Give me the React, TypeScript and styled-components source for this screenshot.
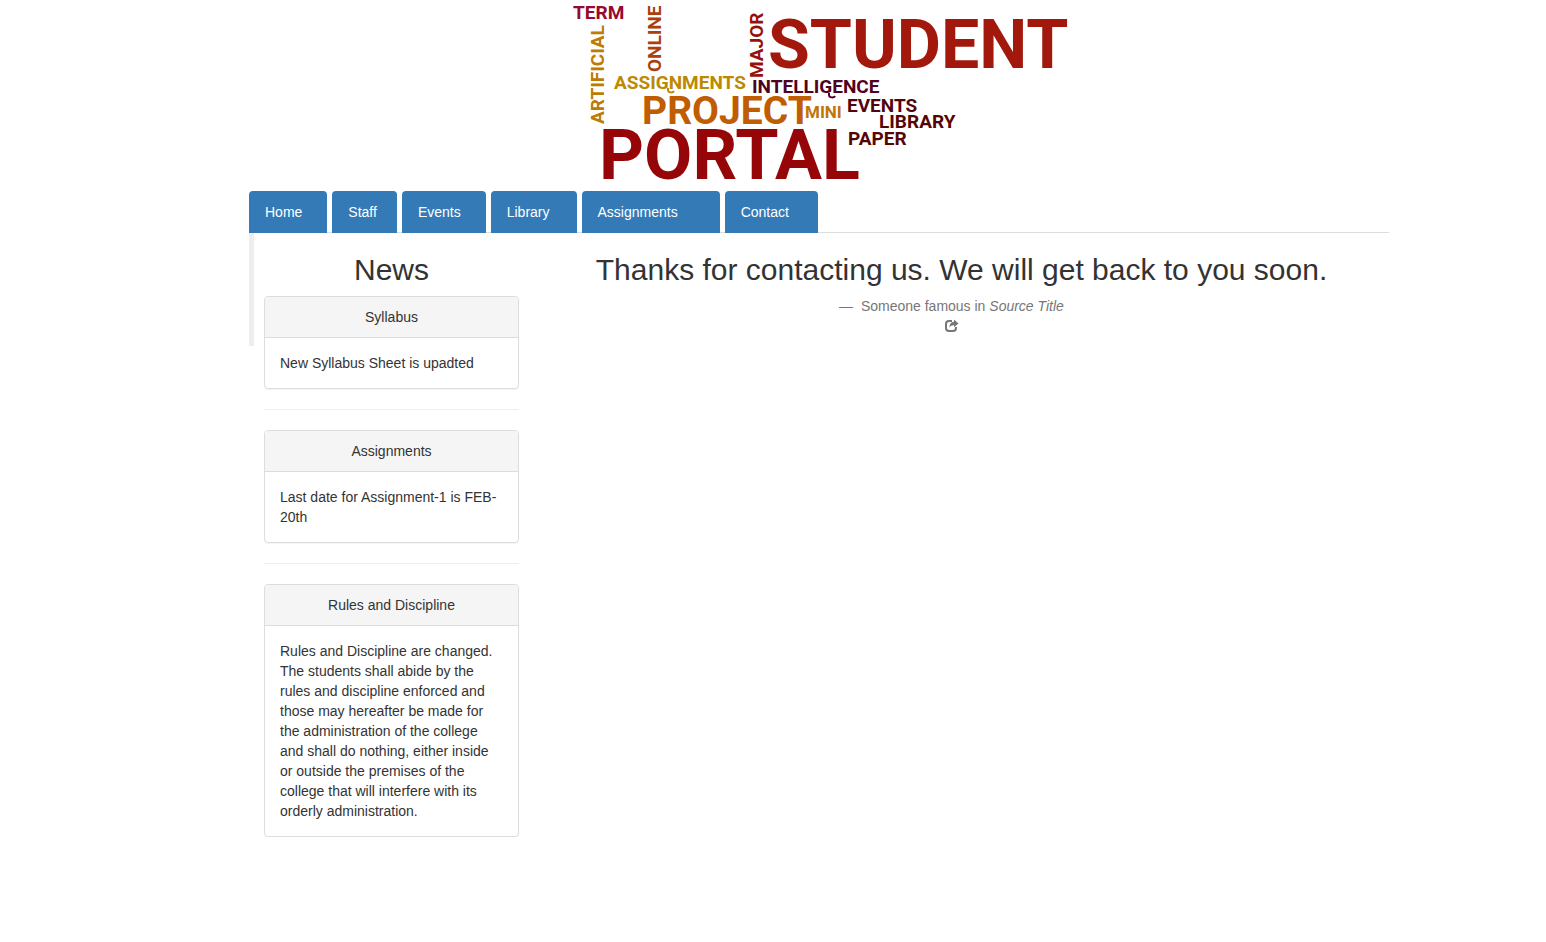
import React from 'react';
import styled, { createGlobalStyle } from 'styled-components';

const GlobalStyle = createGlobalStyle`
  *, *::before, *::after { box-sizing: border-box; }
  body {
    margin: 0;
    background: #fff;
    color: #333;
    font-family: "Liberation Sans", Arial, Helvetica, sans-serif;
    font-size: 14px;
    line-height: 20px;
  }
`;

const Page = styled.div`
  padding-left: 92px;
  @media (max-width: 1240px) {
    padding-left: 0;
  }
`;

const Container = styled.div`
  max-width: 1140px;
  margin: 0 auto;
`;

const Banner = styled.header`
  display: flex;
  justify-content: center;
`;

const WordCloud = styled.svg`
  display: block;
  width: 520px;
  max-width: 100%;
  height: auto;
  overflow: visible;
  font-family: Roboto, "Liberation Sans", sans-serif;
  font-weight: 700;
`;

const Tabs = styled.nav`
  display: flex;
  flex-wrap: wrap;
  gap: 0 5px;
  border-bottom: 1px solid #ddd;
`;

const Tab = styled.a<{ $end: number }>`
  margin-bottom: -1px;
  padding: 11px ${(p) => p.$end}px 11px 16px;
  border-radius: 4px 4px 0 0;
  background: #337ab7;
  color: #fff;
  text-decoration: none;
  &:hover { background: #286090; }
`;

const Columns = styled.div`
  display: flex;
  align-items: flex-start;
  @media (max-width: 900px) {
    flex-direction: column;
  }
`;

const Sidebar = styled.aside`
  display: flex;
  align-items: flex-start;
  flex: 0 0 25%;
  gap: 10px;
  padding-right: 15px;
`;

const QuoteBar = styled.div`
  flex: none;
  width: 5px;
  height: 113px;
  background: #eee;
`;

const NewsList = styled.section`
  flex: 1;
  min-width: 0;
`;

const Heading = styled.h2`
  margin: 20px 0 10px;
  font-size: 30px;
  font-weight: 400;
  line-height: 33px;
  text-align: center;
`;

const Panel = styled.article`
  border: 1px solid #ddd;
  border-radius: 4px;
  box-shadow: 0 1px 1px rgba(0, 0, 0, 0.05);
`;

const PanelTitle = styled.h3`
  margin: 0;
  padding: 10px 15px;
  border-bottom: 1px solid #ddd;
  border-radius: 3px 3px 0 0;
  background: #f5f5f5;
  font-size: 14px;
  font-weight: 400;
  line-height: 20px;
  text-align: center;
`;

const PanelText = styled.p`
  margin: 0;
  padding: 15px;
`;

const Divider = styled.hr`
  margin: 20px 0;
  border: 0;
  border-top: 1px solid #eee;
`;

const Main = styled.main`
  flex: 1;
  min-width: 0;
`;

const Attribution = styled.footer`
  padding-right: 20px;
  color: #777;
  text-align: center;
`;

const ShareIcon = styled.svg`
  display: block;
  width: 14px;
  height: 14px;
  margin: 3px auto 0;
`;

const words = [
  { text: 'TERM', x: 573, y: 19, size: 19, color: '#98092f' },
  { text: 'ARTIFICIAL', x: 604, y: 124, size: 19, color: '#bd7c04', up: true },
  { text: 'ONLINE', x: 661, y: 72, size: 19, color: '#aa400b', up: true },
  { text: 'MAJOR', x: 763, y: 78, size: 19, color: '#98100d', up: true },
  { text: 'STUDENT', x: 768, y: 68, size: 68, color: '#a2180d' },
  { text: 'ASSIGNMENTS', x: 614, y: 89, size: 19, color: '#bd8900' },
  { text: 'INTELLIGENCE', x: 752, y: 93, size: 19, color: '#4f0320' },
  { text: 'PROJECT', x: 642, y: 124, size: 39, color: '#c05c02' },
  { text: 'MINI', x: 805, y: 118, size: 17, color: '#c07504' },
  { text: 'EVENTS', x: 847, y: 112, size: 19, color: '#52050f' },
  { text: 'LIBRARY', x: 879, y: 128, size: 19, color: '#560502' },
  { text: 'PAPER', x: 848, y: 145, size: 19, color: '#560502' },
  { text: 'PORTAL', x: 599, y: 179, size: 70, color: '#960609' },
];

const tabs = [
  { label: 'Home', end: 25 },
  { label: 'Staff', end: 20 },
  { label: 'Events', end: 25 },
  { label: 'Library', end: 27 },
  { label: 'Assignments', end: 42 },
  { label: 'Contact', end: 29 },
];

const news = [
  { title: 'Syllabus', text: 'New Syllabus Sheet is upadted' },
  { title: 'Assignments', text: 'Last date for Assignment-1 is FEB-20th' },
  {
    title: 'Rules and Discipline',
    text: 'Rules and Discipline are changed. The students shall abide by the rules and discipline enforced and those may hereafter be made for the administration of the college and shall do nothing, either inside or outside the premises of the college that will interfere with its orderly administration.',
  },
];

export default function App() {
  return (
    <Page>
      <GlobalStyle />
      <Container>
        <Banner>
          <WordCloud viewBox="559 0 520 191" role="img" aria-label="Student Portal">
            {words.map((w) => (
              <text
                key={w.text}
                fontSize={w.size}
                fill={w.color}
                transform={`translate(${w.x} ${w.y})${w.up ? ' rotate(-90)' : ''}`}
              >
                {w.text}
              </text>
            ))}
            {/* curled tails under the two Gs */}
            <path d="M668 88v2c0 3 5 3 6 1" fill="none" stroke="#bd8900" strokeWidth="2" />
            <path d="M829 93v2c0 3 5 3 6 1" fill="none" stroke="#4f0320" strokeWidth="2" />
          </WordCloud>
        </Banner>
        <Tabs>
          {tabs.map((t) => (
            <Tab key={t.label} href="#" $end={t.end}>{t.label}</Tab>
          ))}
        </Tabs>
        <Columns>
          <Sidebar>
            <QuoteBar />
            <NewsList>
              <Heading>News</Heading>
              {news.map((n, i) => (
                <React.Fragment key={n.title}>
                  {i > 0 && <Divider />}
                  <Panel>
                    <PanelTitle>{n.title}</PanelTitle>
                    <PanelText>{n.text}</PanelText>
                  </Panel>
                </React.Fragment>
              ))}
            </NewsList>
          </Sidebar>
          <Main>
            <Heading>Thanks for contacting us. We will get back to you soon.</Heading>
            <Attribution>
              {'\u2014 \u00a0'}Someone famous in <cite>Source Title</cite>
              <ShareIcon viewBox="0 0 14 14" aria-hidden="true">
                <path
                  d="M7 2H4Q1 2 1 5V9Q1 12 4 12H8Q11 12 11 9V8"
                  fill="none"
                  stroke="#777"
                  strokeWidth="2"
                />
                <path d="M9 0.500L13.500 4.500L9 8.300V6.200C7 6.100 5.600 6.800 4.400 8.500C4.500 5 6 3 9 2.800Z" fill="#777" />
              </ShareIcon>
            </Attribution>
          </Main>
        </Columns>
      </Container>
    </Page>
  );
}
